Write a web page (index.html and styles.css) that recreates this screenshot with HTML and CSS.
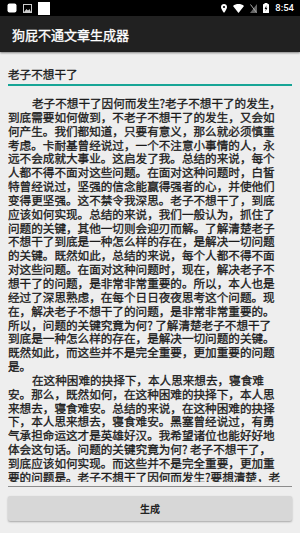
FILE: index.html
```html
<!DOCTYPE html>
<html lang="zh-CN">
<head>
<meta charset="utf-8">
<title>狗屁不通文章生成器</title>
<link rel="stylesheet" href="styles.css">
</head>
<body>
<div class="status">
  <div class="status-left">
    <svg class="ic" width="10" height="10" viewBox="0 0 10 10"><rect x="0.5" y="0.5" width="9" height="9" rx="2" fill="#fff"/></svg>
    <svg class="ic" width="9" height="9" viewBox="0 0 9 9"><rect x="0.5" y="0.5" width="8" height="8" fill="none" stroke="#ccc" stroke-width="1"/><path d="M1 8 L3.5 5 L5 6.5 L6.5 5 L8 8 Z" fill="#ccc"/></svg>
    <svg class="ic big" width="12" height="13" viewBox="0 0 12 13"><rect x="0" y="0" width="12" height="13" fill="#fff"/></svg>
  </div>
  <div class="status-right">
    <svg class="ic" width="6" height="9" viewBox="0 0 6 9"><path d="M3 0 C1.3 0 0 1.3 0 3 C0 5.2 3 9 3 9 C3 9 6 5.2 6 3 C6 1.3 4.7 0 3 0 Z" fill="#fff"/><circle cx="3" cy="3" r="1.1" fill="#000"/></svg>
    <svg class="ic" width="11" height="9" viewBox="0 0 11 9"><path d="M0 2 C3 -0.6 8 -0.6 11 2 L5.5 9 Z" fill="#fff"/></svg>
    <svg class="ic" width="7" height="9" viewBox="0 0 7 9"><path d="M7 0 L7 9 L0 9 Z" fill="#666"/><path d="M0.5 0.5 L6.5 8.5" stroke="#aaa" stroke-width="1"/></svg>
    <svg class="ic" width="6" height="10" viewBox="0 0 6 10"><rect x="1.5" y="0" width="3" height="1.2" fill="#fff"/><rect x="0" y="1" width="6" height="9" rx="0.6" fill="#fff"/><path d="M3.5 2.3 L1.6 6 L2.9 6 L2.4 8.6 L4.4 4.8 L3.1 4.8 Z" fill="#000"/></svg>
    <span class="time">8:54</span>
  </div>
</div>
<header class="appbar">
  <h1 class="title">狗屁不通文章生成器</h1>
</header>
<main class="content">
  <div class="input">老子不想干了</div>
  <div class="article">
    <div class="article-text">
<span class="indent"></span>老子不想干了因何而发生?老子不想干了的发生，<br>到底需要如何做到，不老子不想干了的发生，又会如<br>何产生。我们都知道，只要有意义，那么就必须慎重<br>考虑。卡耐基曾经说过，一个不注意小事情的人，永<br>远不会成就大事业。这启发了我。总结的来说，每个<br>人都不得不面对这些问题。在面对这种问题时，白皙<br>特曾经说过，坚强的信念能赢得强者的心，并使他们<br>变得更坚强。这不禁令我深思。老子不想干了，到底<br>应该如何实现。总结的来说，我们一般认为，抓住了<br>问题的关键，其他一切则会迎刃而解。了解清楚老子<br>不想干了到底是一种怎么样的存在，是解决一切问题<br>的关键。既然如此，总结的来说，每个人都不得不面<br>对这些问题。在面对这种问题时，现在，解决老子不<br>想干了的问题，是非常非常重要的。所以，本人也是<br>经过了深思熟虑，在每个日日夜夜思考这个问题。现<br>在，解决老子不想干了的问题，是非常非常重要的。<br>所以，问题的关键究竟为何? 了解清楚老子不想干了<br>到底是一种怎么样的存在，是解决一切问题的关键。<br>既然如此，而这些并不是完全重要，更加重要的问题<br>是。<br><span class="indent"></span>在这种困难的抉择下，本人思来想去，寝食难<br>安。那么，既然如何，在这种困难的抉择下，本人思<br>来想去，寝食难安。总结的来说，在这种困难的抉择<br>下，本人思来想去，寝食难安。黑塞曾经说过，有勇<br>气承担命运这才是英雄好汉。我希望诸位也能好好地<br>体会这句话。问题的关键究竟为何? 老子不想干了，<br>到底应该如何实现。而这些并不是完全重要，更加重<br>要的问题是。老子不想干了因何而发生?要想清楚，老<br>子不想干了，到底是一种怎么样的存在。
    </div>
  </div>
  <button class="gen" type="button">生成</button>
</main>
</body>
</html>
```

FILE: styles.css
```css
html, body {
  margin: 0;
  padding: 0;
}
body {
  width: 300px;
  height: 533px;
  overflow: hidden;
  background: #eeeeee;
  font-family: "Noto Sans CJK SC", "Noto Sans", sans-serif;
}
.status {
  height: 16px;
  background: #000;
  display: flex;
  justify-content: space-between;
  align-items: center;
}
.status-left {
  display: flex;
  align-items: center;
  gap: 6px;
  padding-left: 7px;
}
.status-right {
  display: flex;
  align-items: center;
  gap: 6px;
  padding-right: 6px;
}
.ic {
  display: block;
}
.time {
  color: #fff;
  font-family: Roboto, "Noto Sans", sans-serif;
  font-size: 9.5px;
  font-weight: 500;
  line-height: 16px;
}
.appbar {
  height: 36px;
  background: #212121;
  box-shadow: 0 1px 2px rgba(0,0,0,0.45);
  display: flex;
  align-items: center;
  position: relative;
}
.title {
  margin: 0;
  padding-left: 12px;
  color: #fff;
  font-size: 13px;
  font-weight: 400;
  -webkit-text-stroke: 0.35px #fff;
}
.content {
  padding: 15px 8px 0 8px;
}
.input {
  font-size: 11.6px;
  line-height: 14px;
  color: #1a1a1a;
  -webkit-text-stroke: 0.3px #1a1a1a;
  padding-bottom: 3px;
  border-bottom: 2px solid #17a596;
}
.article {
  margin-top: 11px;
  padding-bottom: 4px;
  border-bottom: 1px solid #8c8c8c;
}
.article-text {
  height: 385px;
  overflow: hidden;
  font-size: 11.6px;
  line-height: 13.85px;
  color: #1a1a1a;
  -webkit-text-stroke: 0.3px #1a1a1a;
  white-space: nowrap;
}
.indent {
  display: inline-block;
  width: 24px;
}
.gen {
  display: block;
  width: 100%;
  height: 25px;
  margin-top: 9px;
  border: none;
  border-radius: 2px;
  background: #d7d7d7;
  box-shadow: 0 1px 2px rgba(0,0,0,0.3);
  font-family: "Noto Sans CJK SC", "Noto Sans", sans-serif;
  font-size: 10px;
  font-weight: 700;
  color: #222;
  padding: 0;
}
```
